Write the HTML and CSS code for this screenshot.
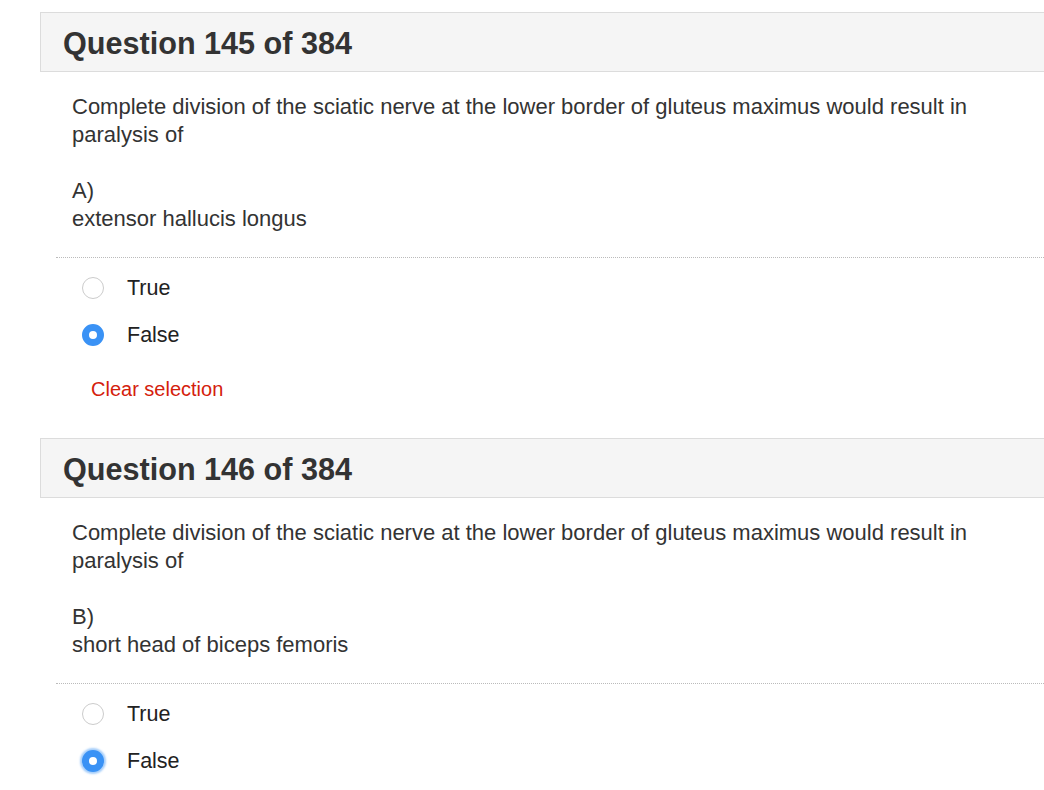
FILE: index.html
```html
<!DOCTYPE html>
<html>
<head>
<meta charset="utf-8">
<link rel="stylesheet" href="styles.css">
</head>
<body>
<div class="page">
  <section class="question">
    <div class="q-header"><h2 class="q-title">Question 145 of 384</h2></div>
    <div class="q-body">
      <p class="q-text">Complete division of the sciatic nerve at the lower border of gluteus maximus would result in paralysis of</p>
      <p class="q-option">A)<br>extensor hallucis longus</p>
    </div>
    <div class="q-answers">
      <label class="choice"><span class="radio"></span><span class="choice-label">True</span></label>
      <label class="choice"><span class="radio checked"></span><span class="choice-label">False</span></label>
      <a class="clear">Clear selection</a>
    </div>
  </section>
  <section class="question">
    <div class="q-header"><h2 class="q-title">Question 146 of 384</h2></div>
    <div class="q-body">
      <p class="q-text">Complete division of the sciatic nerve at the lower border of gluteus maximus would result in paralysis of</p>
      <p class="q-option">B)<br>short head of biceps femoris</p>
    </div>
    <div class="q-answers">
      <label class="choice"><span class="radio"></span><span class="choice-label">True</span></label>
      <label class="choice"><span class="radio checked focus"></span><span class="choice-label">False</span></label>
    </div>
  </section>
</div>
</body>
</html>
```
FILE: styles.css
```css
html, body {
  margin: 0;
  padding: 0;
  background: #fff;
}
body {
  font-family: "Liberation Sans", Arial, sans-serif;
  color: #333;
  overflow: hidden;
}
.page {
  padding-left: 40px;
  padding-top: 12px;
}
.question {
  display: flex;
  flex-direction: column;
}
.q-header {
  height: 58px;
  background: #f5f5f5;
  border: 1px solid #dcdcdc;
  border-right: none;
  display: flex;
  align-items: center;
  padding-left: 22px;
}
.q-title {
  margin: 0;
  font-size: 30.6px;
  font-weight: bold;
  color: #333;
  padding-top: 3px;
}
.q-body {
  padding: 21px 0 0 32px;
}
.q-text, .q-option {
  margin: 0;
  font-size: 22px;
  line-height: 28px;
}
.q-text {
  margin-bottom: 28px;
}
.q-option {
  padding-bottom: 24px;
  border-bottom: 1px dotted #bbb;
  margin-left: -16px;
  padding-left: 16px;
}
.q-answers {
  display: flex;
  flex-direction: column;
  padding-left: 42px;
  padding-top: 18px;
}
.choice {
  display: flex;
  align-items: center;
  height: 24px;
  margin-bottom: 23px;
}
.radio {
  width: 22px;
  height: 22px;
  border-radius: 50%;
  border: 1.5px solid #ccc;
  box-sizing: border-box;
  flex: none;
  margin-right: 23px;
  background: #fff;
}
.radio.checked {
  border: 7px solid #3a92f5;
  background: #fff;
}
.radio.focus {
  box-shadow: 0 0 2px 2px rgba(58,146,245,0.45);
}
.choice-label {
  font-size: 21.5px;
  color: #222;
}
.clear {
  color: #d4200c;
  font-size: 20px;
  margin-left: 9px;
  margin-top: 8px;
  margin-bottom: 37px;
}
```
